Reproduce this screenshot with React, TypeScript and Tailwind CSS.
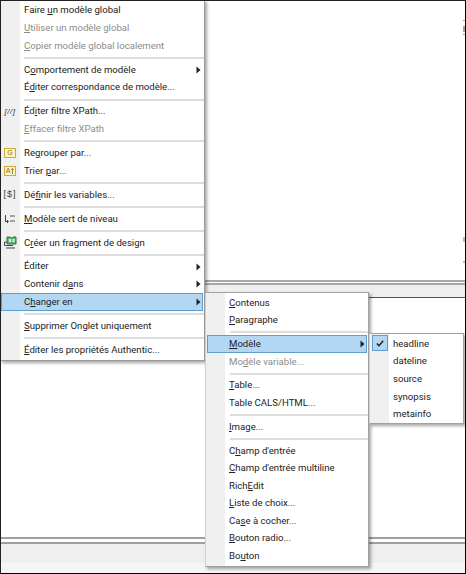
import { ReactNode } from 'react';

// "&" in a label marks the underlined mnemonic letter
function Label({ text }: { text: string }) {
  const i = text.indexOf('&');
  if (i < 0) return <span>{text}</span>;
  return (
    <span>
      {text.slice(0, i)}
      <u>{text[i + 1]}</u>
      {text.slice(i + 2)}
    </span>
  );
}

function Arrow() {
  return (
    <svg className="absolute right-[3px] top-1/2 -mt-[4px]" width="5" height="8" viewBox="0 0 5 8">
      <path d="M0.5 0.5 L4.5 4 L0.5 7.5 Z" fill="#222" />
    </svg>
  );
}

type RowProps = {
  text: string;
  off?: boolean;
  sub?: boolean;
  active?: boolean;
  tight?: boolean;
  icon?: ReactNode;
  pad?: string;
};

function Row({ text, off, sub, active, tight, icon, pad = 'pl-[24px]' }: RowProps) {
  return (
    <div
      className={`relative ${tight ? 'h-[17.6px]' : 'h-[17.75px]'} flex items-center ${pad} whitespace-nowrap ${off ? 'text-[#8c8c8c]' : 'text-[#222]'}`}
    >
      {active && <div className="absolute inset-x-[1px] inset-y-0 bg-[#b3d7f2] border border-[#5b9fd0]" />}
      {icon && <div className="absolute left-0 top-0 w-[20px] h-full flex items-center justify-center">{icon}</div>}
      <span className="relative">
        <Label text={text} />
      </span>
      {sub && <Arrow />}
    </div>
  );
}

function Sep() {
  return (
    <div className="h-[6.2px] flex items-center">
      <div className="h-[2px] flex-1 bg-[#dcdcdc] ml-[24px]" />
    </div>
  );
}

function YellowBox({ children }: { children: ReactNode }) {
  return (
    <div className="w-[12px] h-[10px] flex items-center justify-center gap-[1px] border border-[#cfa93a] bg-[#fdf3c0] text-[#8a6d14] text-[7px] leading-[8px] font-['Liberation_Sans',sans-serif]">
      {children}
    </div>
  );
}

function LevelIcon() {
  return (
    <svg width="12" height="10" viewBox="0 0 12 10" fill="none" stroke="#444" strokeWidth="1">
      <path d="M1.5 1 V7.5 H4" />
      <path d="M3 6 L4.5 7.5 L3 9" />
      <path d="M6 2 H11 M6 7 H11" stroke="#555" />
    </svg>
  );
}

function FragmentIcon() {
  return (
    <svg width="13" height="13" viewBox="0 0 13 13">
      <path d="M3 1 H6 L7 2 H8 L9 1 H12 V8 H3 Z" fill="#5db878" stroke="#1f7a3c" />
      <rect x="5" y="3" width="2" height="3" fill="#d8f0dd" />
      <rect x="8.5" y="3" width="2" height="3" fill="#d8f0dd" />
      <path d="M0.5 6 H3 M0.5 6 V9.5 H9" fill="none" stroke="#444" />
      <path d="M2 12 H11" stroke="#444" />
    </svg>
  );
}

function Check() {
  return (
    <svg width="8" height="7" viewBox="0 0 8 7" fill="none" stroke="#1a1a1a" strokeWidth="1.4">
      <path d="M0.8 3.6 L3 5.8 L7.2 0.8" />
    </svg>
  );
}

function MainMenu() {
  return (
    <div className="absolute left-0 top-0 w-[205px] h-[361px] pt-[1.5px] border-r border-b border-[#9a9a9a] shadow-[2px_2px_3px_rgba(0,0,0,0.35)] bg-[linear-gradient(to_right,#f0f0f0_20px,#ffffff_20px)]">
      <Row text="Faire &un modèle global" />
      <Row text="&Utiliser un modèle global" off />
      <Row text="&Copier modèle global localement" off />
      <Sep />
      <Row text="C&omportement de modèle" sub />
      <Row text="É&diter correspondance de modèle..." />
      <Sep />
      <Row
        text="Éd&iter filtre XPath..."
        icon={<span className="text-[8px] italic tracking-[0.5px] text-[#333] font-['Liberation_Sans',sans-serif]">[//]</span>}
      />
      <Row text="&Effacer filtre XPath" off />
      <Sep />
      <Row text="Re&grouper par..." icon={<YellowBox>G</YellowBox>} />
      <Row
        text="Trier &par..."
        icon={
          <YellowBox>
            <span>A</span>
            <svg width="3" height="6" viewBox="0 0 3 6" fill="none" stroke="#8a6d14" strokeWidth="0.8">
              <path d="M1.5 6 V0.5 M0.2 2 L1.5 0.5 L2.8 2" />
            </svg>
          </YellowBox>
        }
      />
      <Sep />
      <Row
        text="Dé&finir les variables..."
        icon={<span className="text-[9px] tracking-[1px] text-[#444] font-['Liberation_Sans',sans-serif]">[$]</span>}
      />
      <Sep />
      <Row text="&Modèle sert de niveau" icon={<LevelIcon />} />
      <Sep />
      <Row text="C&réer un fragment de design" icon={<FragmentIcon />} />
      <Sep />
      <Row text="Éditer" sub />
      <Row text="Contenir d&ans" sub />
      <Row text="C&hanger en" sub active />
      <Sep />
      <Row text="&Supprimer Onglet uniquement" />
      <Sep />
      <Row text="&Éditer les propriétés Authentic..." />
    </div>
  );
}

function ChangeMenu() {
  return (
    <div className="absolute left-[205px] top-[292px] w-[164px] h-[275px] pt-[1px] border border-[#a0a0a0] border-l-[#d0d0d0] shadow-[2px_2px_3px_rgba(0,0,0,0.35)] bg-[linear-gradient(to_right,#f0f0f0_19px,#ffffff_19px)]">
      <Row tight text="&Contenus" pad="pl-[23px]" />
      <Row tight text="&Paragraphe" pad="pl-[23px]" />
      <Sep />
      <Row tight text="&Modèle" sub active pad="pl-[23px]" />
      <Row tight text="Mo&dèle variable..." off pad="pl-[23px]" />
      <Sep />
      <Row tight text="&Table..." pad="pl-[23px]" />
      <Row tight text="Table CALS/HTML..." pad="pl-[23px]" />
      <Sep />
      <Row tight text="&Image..." pad="pl-[23px]" />
      <Sep />
      <Row tight text="C&hamp d'entrée" pad="pl-[23px]" />
      <Row tight text="&Champ d'entrée multiline" pad="pl-[23px]" />
      <Row tight text="Rich&Edit" pad="pl-[23px]" />
      <Row tight text="&Liste de choix..." pad="pl-[23px]" />
      <Row tight text="Ca&se à cocher..." pad="pl-[23px]" />
      <Row tight text="&Bouton radio..." pad="pl-[23px]" />
      <Row tight text="Bo&uton" pad="pl-[23px]" />
    </div>
  );
}

function TemplateMenu() {
  const names = ['headline', 'dateline', 'source', 'synopsis', 'metainfo'];
  return (
    <div className="absolute left-[369px] top-[333px] w-[95px] h-[91px] pt-[1.2px] border border-[#a0a0a0] border-l-[#d0d0d0] shadow-[2px_2px_3px_rgba(0,0,0,0.35)] bg-[linear-gradient(to_right,#f0f0f0_19px,#ffffff_19px)]">
      <div className="absolute left-[2px] top-[1px] w-[16px] h-[16px] flex items-center justify-center bg-[#b3d7f2] border border-[#5b9fd0]">
        <Check />
      </div>
      {names.map((n) => (
        <Row tight key={n} text={n} pad="pl-[23px]" />
      ))}
    </div>
  );
}

export default function App() {
  return (
    <div className="relative w-[466px] h-[574px] bg-white overflow-hidden text-[9.6px] font-['Roboto',sans-serif] border border-t-[#222] border-l-[#222] border-r-black border-b-black">
      <div className="flex flex-col h-full">
        <div className="h-[279px] bg-white" />
        <div className="h-[5px] bg-white border-y-2 border-[#a8a8a8]" />
        <div className="h-[12px] bg-[#efefef] border-b border-[#555] box-content" />
        <div className="h-[239px] bg-white" />
        <div className="h-[7px] bg-white border-y-2 border-[#a0a0a0]" />
        <div className="flex-1 bg-[#efefef] flex flex-col justify-end">
          <div className="h-[10px] bg-[#f5f5f5]" />
        </div>
      </div>
      {/* tick marks of the panels behind the menus */}
      <div className="absolute left-[462px] top-[19px] w-[2px] h-[1px] bg-[#999]" />
      <div className="absolute left-[462px] top-[25px] w-[2px] h-[6px] bg-[#a89f8c]" />
      <div className="absolute left-[462px] top-[33px] w-[2px] h-[1px] bg-[#999]" />
      <div className="absolute left-[462px] top-[236px] w-[2px] h-[5px] bg-[#bbb]" />
      <div className="absolute left-[462px] top-[260px] w-[2px] h-[2px] bg-[#bbb]" />
      <div className="absolute left-[-1px] top-[-1px] w-[466px] h-[574px]">
        <MainMenu />
        <ChangeMenu />
        <TemplateMenu />
      </div>
    </div>
  );
}
